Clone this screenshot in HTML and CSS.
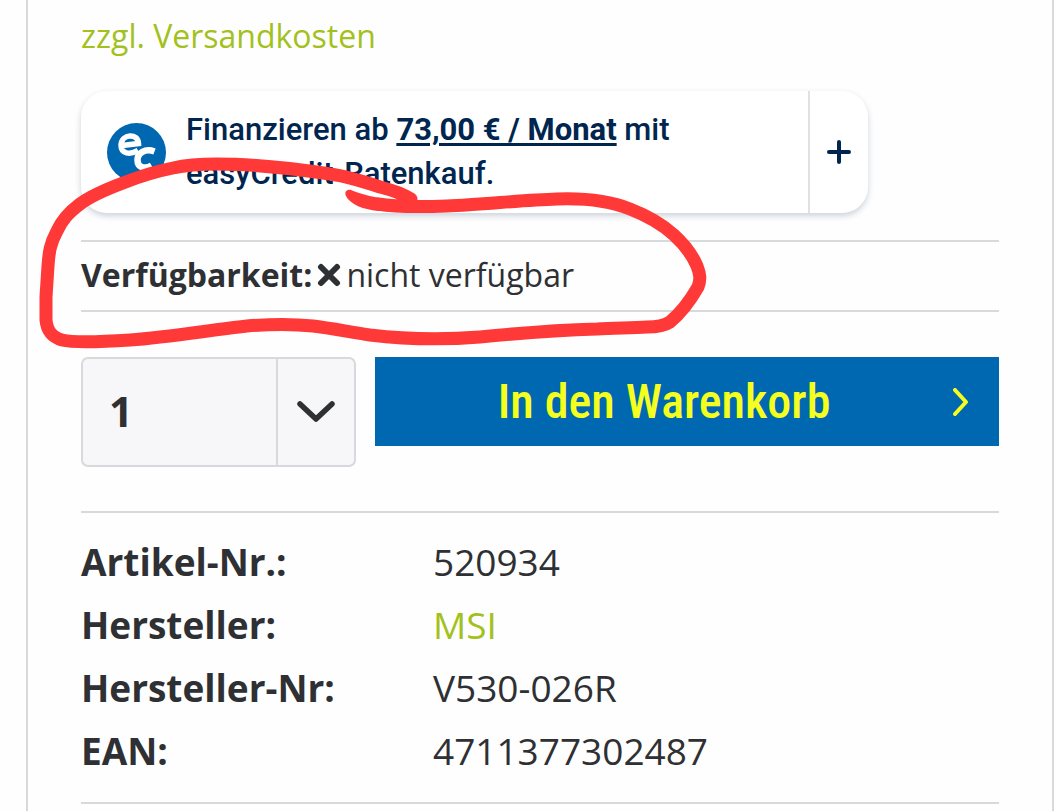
FILE: index.html
```
<!DOCTYPE html>
<html lang="de">
<head>
<meta charset="utf-8">
<meta name="viewport" content="width=device-width, initial-scale=1">
<title>Artikel 520934</title>
<link rel="stylesheet" href="styles.css">
</head>
<body>
<main class="product">
  <a class="link shipping" href="#versand">zzgl. Versandkosten</a>

  <section class="finance">
    <svg class="finance-logo" viewBox="0 0 60 60" aria-hidden="true">
      <circle cx="29.500" cy="30.500" r="29.500" fill="#0067b1"/>
      <g fill="none" stroke="#fff">
        <path stroke-width="5.500" d="M15 23.500 L31.500 21.500 C31 10.500 14.500 12 14 23 C14 32 23 33 31 28.500"/>
        <path stroke-width="6.500" d="M47.500 29.500 C38 26 30.500 31 30.500 38 C30.500 46 38 47 44.500 43.500"/>
      </g>
    </svg>
    <p class="finance-text">Finanzieren ab <a class="finance-rate" href="#rate">73,00 € / Monat</a> mit easyCredit-Ratenkauf.</p>
    <button class="finance-more" type="button" aria-label="Mehr anzeigen">
      <svg class="plus" viewBox="0 0 24 24" aria-hidden="true"><path d="M12 2V22M2 12H22" fill="none" stroke="#002650" stroke-width="4" stroke-linecap="round"/></svg>
    </button>
  </section>

  <p class="availability">
    <strong>Verfügbarkeit:</strong>
    <svg class="cross" viewBox="0 0 24 24" aria-hidden="true"><path d="M4 4L20 20M20 4L4 20" fill="none" stroke="#2e3033" stroke-width="6" stroke-linecap="round"/></svg>
    <span>nicht verfügbar</span>
  </p>

  <form class="buy">
    <div class="quantity">
      <select class="quantity-select" aria-label="Menge">
        <option>1</option>
        <option>2</option>
        <option>3</option>
      </select>
      <span class="quantity-arrow"><svg class="chevron-down" viewBox="0 0 38 22" aria-hidden="true"><path d="M3 3L19 18L35 3" fill="none" stroke="#2e3033" stroke-width="5.500" stroke-linecap="round" stroke-linejoin="round"/></svg></span>
    </div>
    <button class="cart" type="submit">
      <span class="cart-label">In den Warenkorb</span>
      <svg class="chevron-right" viewBox="0 0 16 28" aria-hidden="true"><path d="M2 2L13 14L2 26" fill="none" stroke="#f5ff1e" stroke-width="4" stroke-linecap="round" stroke-linejoin="round"/></svg>
    </button>
  </form>

  <dl class="facts">
    <dt>Artikel-Nr.:</dt><dd>520934</dd>
    <dt>Hersteller:</dt><dd><a class="link" href="#msi">MSI</a></dd>
    <dt>Hersteller-Nr:</dt><dd>V530-026R</dd>
    <dt>EAN:</dt><dd>4711377302487</dd>
  </dl>

  <svg class="marker" viewBox="0 0 720 360" aria-hidden="true">
    <path class="marker-line" d="M411 199 C403 194 392 190 380 187 C362 181 346 176 330 174 C290 168 250 164 217 164 C200 164 186 165 173 168 C153 172 138 177 123 183 C107 189 92 195 80 204 C68 213 62 220 57 231 C50 244 49 252 48 266 L46 297 L46 320 C47 331 52 337 62 340 C74 343 100 342 130 340 C170 337 210 330 247 326 C270 324 295 324 313 326 C330 328 350 332 370 335 C395 338 430 341 480 337 C520 333 560 330 597 329 C615 328 632 328 647 327 C657 327 664 326 670 322 C682 312 690 301 698 287 C701 279 700 274 697 266 C692 254 685 245 674 235 C662 224 648 216 630 209 C610 201 585 198 557 199 C520 200 482 205 447 206 C420 207 395 207 378 204"/>
    <path class="marker-tip" d="M380 198 C369 196 361 194 351 190 C347 189 344 192 346 196 C350 204 363 210 380 211 Z"/>
  </svg>
</main>
</body>
</html>
```

FILE: styles.css
```
* {
  box-sizing: border-box;
}

body {
  margin: 0;
  background: #fefefe;
  color: #2e3033;
  font-family: "Open Sans", sans-serif;
  font-size: 32px;
  line-height: 44px;
}

p,
dl,
dd {
  margin: 0;
}

.product {
  position: relative;
  min-height: 100vh;
  margin-left: 26px;
  padding: 14px 53px 0;
  border: solid #d8d9db;
  border-width: 0 2px;
}

.link {
  color: #a2c11c;
  text-decoration: none;
}

.shipping {
  display: block;
}

.finance {
  display: flex;
  align-items: center;
  max-width: 787px;
  margin-top: 33px;
  padding-left: 26px;
  border-radius: 26px;
  background: #fff;
  box-shadow: 0 3px 6px rgba(0, 38, 80, 0.2);
  color: #002650;
  font-family: Roboto, sans-serif;
  font-size: 31px;
  font-weight: 500;
}

.finance-logo {
  flex: none;
  width: 60px;
  height: 60px;
}

.finance-text {
  flex: 1;
  padding: 17px 100px 17px 19px;
}

.finance-rate {
  color: inherit;
  font-weight: 700;
  text-decoration-thickness: 3px;
  text-underline-offset: 3px;
}

.finance-more {
  display: flex;
  flex: none;
  align-items: center;
  justify-content: center;
  align-self: stretch;
  width: 60px;
  padding: 0;
  border: 0;
  border-left: 2px solid #dfe1e4;
  background: none;
}

.plus,
.cross {
  width: 24px;
  height: 24px;
}

.availability {
  display: flex;
  align-items: center;
  gap: 5px;
  margin-top: 27px;
  padding: 11px 0 13px;
  border: solid #d8d9db;
  border-width: 2px 0;
}

.buy {
  display: flex;
  align-items: flex-start;
  gap: 19px;
  margin-top: 45px;
}

.quantity {
  display: grid;
  grid-template-columns: 1fr 78px;
  flex: none;
  width: 275px;
  height: 110px;
  border: 2px solid #d8d9dd;
  border-radius: 7px;
  background: #f7f7fa;
}

.quantity-select {
  grid-area: 1 / 1 / 2 / 3;
  padding: 0 26px 4px;
  border: 0;
  background: none;
  color: inherit;
  font: 700 42px "Open Sans", sans-serif;
  appearance: none;
}

.quantity-arrow {
  display: flex;
  grid-area: 1 / 2 / 2 / 3;
  align-items: center;
  justify-content: center;
  border-left: 2px solid #d8d9dd;
  pointer-events: none;
}

.chevron-down {
  width: 38px;
  height: 22px;
}

.cart {
  display: flex;
  flex: 1;
  align-items: center;
  height: 89px;
  padding: 0 30px 0 0;
  border: 0;
  background: #0068b1;
  color: #f5ff1e;
  font: 500 48px "Roboto Condensed", "Liberation Sans Narrow", sans-serif;
}

.cart-label {
  flex: 1;
  white-space: nowrap;
}

.chevron-right {
  flex: none;
  width: 16px;
  height: 28px;
}

.facts {
  display: grid;
  grid-template-columns: 352px 1fr;
  margin-top: 44px;
  padding: 17px 0 20px;
  border: solid #d8d9db;
  border-width: 2px 0;
  font-size: 37px;
  line-height: 63px;
}

.facts dt {
  font-weight: 700;
}

/* Hand-drawn circle over the availability row */
.marker {
  position: absolute;
  top: 0;
  left: -28px;
  width: 720px;
  height: 360px;
  pointer-events: none;
}

.marker-line {
  fill: none;
  stroke: #ff3838;
  stroke-width: 13px;
  stroke-linecap: round;
  stroke-linejoin: round;
}

.marker-tip {
  fill: #ff3838;
}
```
